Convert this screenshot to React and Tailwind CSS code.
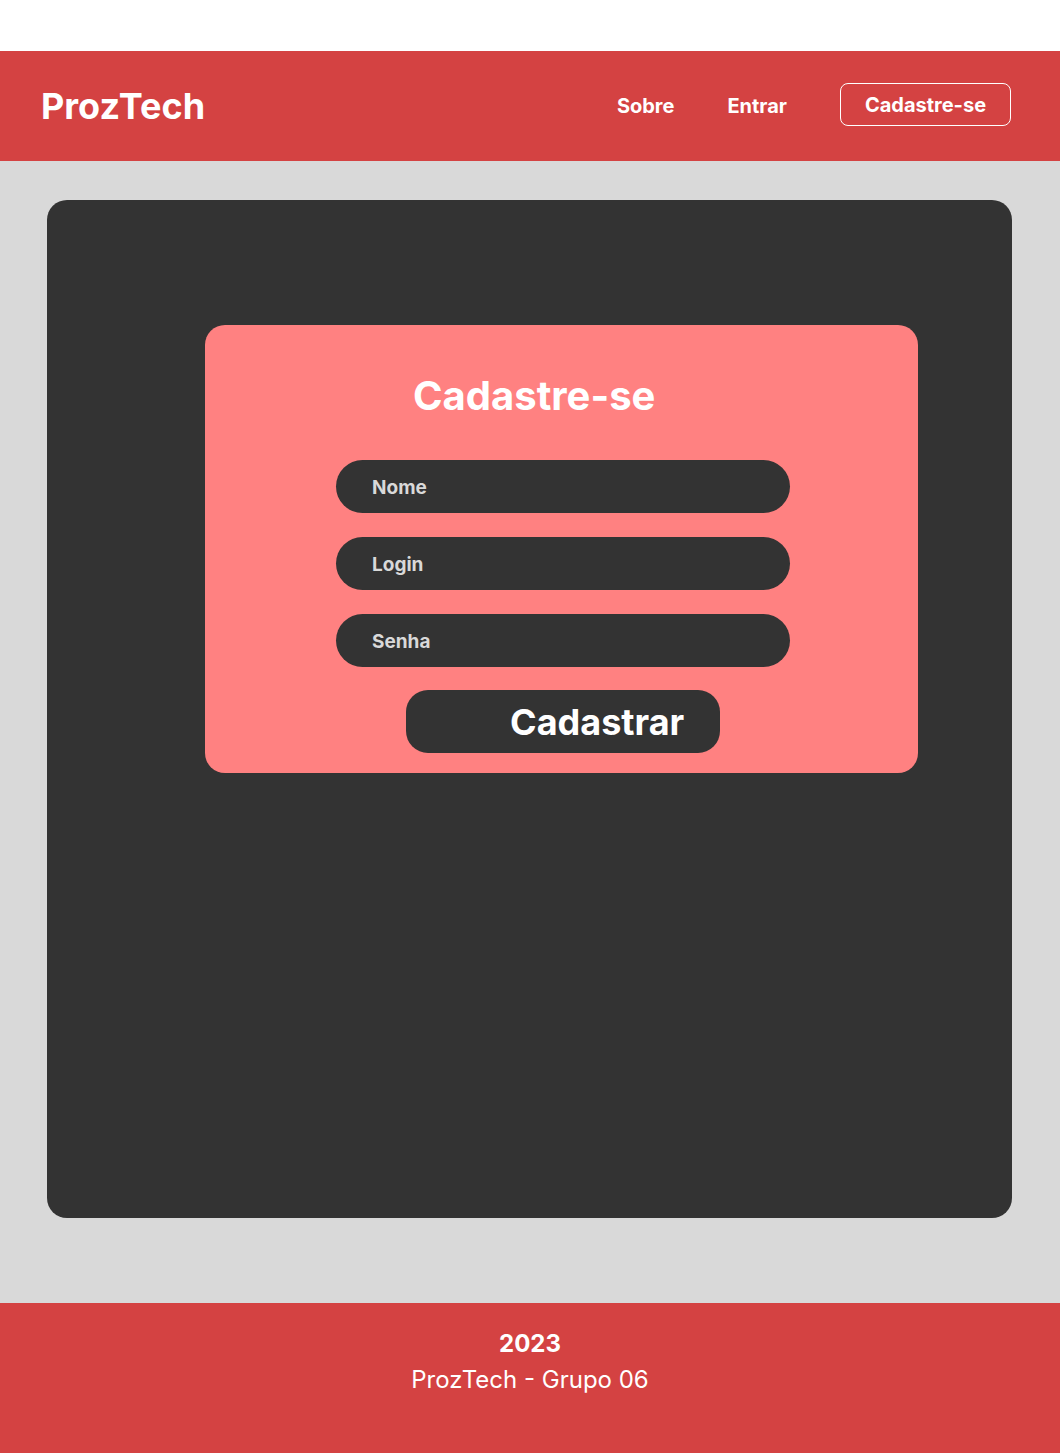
export default function App() {
  return (
    <div className="w-[1060px] bg-white font-['Inter',sans-serif]">
      <div className="h-[51px] bg-white" />
      <header className="h-[110px] bg-[#d44242] flex items-center pl-[41px] pr-[49px]">
        <div className="text-white font-bold text-[36px] leading-none">ProzTech</div>
        <nav className="ml-auto flex items-center">
          <span className="text-white font-bold text-[20px] mr-[53px]">Sobre</span>
          <span className="text-white font-bold text-[20px] mr-[53px]">Entrar</span>
          <span className="w-[171px] h-[43px] mb-[3px] border border-white rounded-[8px] flex items-center justify-center text-white font-bold text-[20px]">Cadastre-se</span>
        </nav>
      </header>
      <main className="bg-[#d9d9d9] h-[1142px] pt-[39px] pl-[47px]">
        <div className="w-[965px] h-[1018px] bg-[#333333] rounded-[20px] pt-[125px] pl-[158px]">
          <div className="w-[713px] h-[448px] bg-[#ff8181] rounded-[20px] pt-[47px]">
            <h1 className="pl-[208px] text-white font-bold text-[40px] leading-[48px]">Cadastre-se</h1>
            <div className="mt-[40px] pl-[131px] flex flex-col gap-[24px]">
              {["Nome", "Login", "Senha"].map((t) => (
                <div key={t} className="w-[454px] h-[53px] bg-[#333333] rounded-full flex items-center pl-[36px] pt-[3px] text-[#d9d9d9] font-bold text-[19px]">
                  {t}
                </div>
              ))}
            </div>
            <div className="mt-[23px] ml-[201px] w-[314px] h-[63px] bg-[#333333] rounded-[22px] flex items-center pl-[104px] text-white font-bold text-[36px]">
              Cadastrar
            </div>
          </div>
        </div>
      </main>
      <footer className="h-[150px] bg-[#d44242] flex flex-col items-center pt-[25px] text-white">
        <div className="font-bold text-[24px] leading-[32px]">2023</div>
        <div className="text-[24px] leading-[32px] mt-[4px]">ProzTech - Grupo 06</div>
      </footer>
    </div>
  );
}
